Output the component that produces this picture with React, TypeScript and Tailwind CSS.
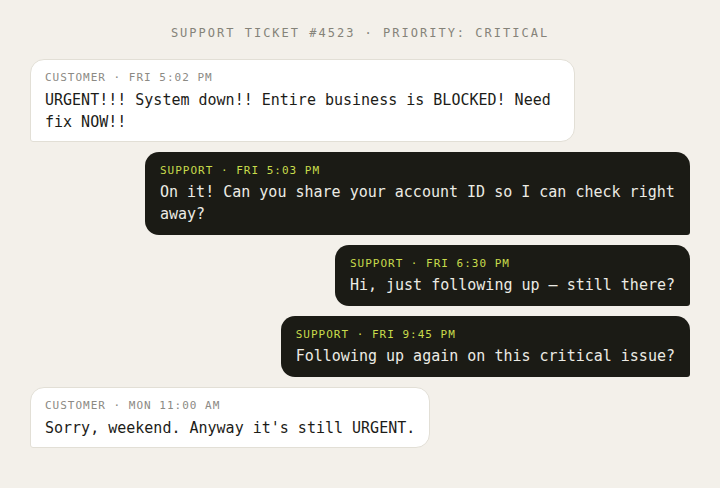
const mono = { fontFamily: '"DejaVu Sans Mono", "Liberation Mono", monospace' };

type Msg = { from: "customer" | "support"; meta: string; text: string };

const messages: Msg[] = [
  { from: "customer", meta: "CUSTOMER · FRI 5:02 PM", text: "URGENT!!! System down!! Entire business is BLOCKED! Need fix NOW!!" },
  { from: "support", meta: "SUPPORT · FRI 5:03 PM", text: "On it! Can you share your account ID so I can check right away?" },
  { from: "support", meta: "SUPPORT · FRI 6:30 PM", text: "Hi, just following up — still there?" },
  { from: "support", meta: "SUPPORT · FRI 9:45 PM", text: "Following up again on this critical issue?" },
  { from: "customer", meta: "CUSTOMER · MON 11:00 AM", text: "Sorry, weekend. Anyway it's still URGENT." },
];

function Bubble({ msg }: { msg: Msg }) {
  const isSupport = msg.from === "support";
  return (
    <div className={isSupport ? "flex justify-end" : "flex justify-start"}>
      <div
        className={
          isSupport
            ? "max-w-[545px] rounded-[14px] rounded-br-[3px] bg-[#1b1b15] px-[15px] pt-[11px] pb-[10px]"
            : "max-w-[545px] rounded-[14px] rounded-bl-[3px] bg-white border border-[#e2dfd6] px-[14px] pt-[10px] pb-[8px]"
        }
      >
        <div
          className={
            isSupport
              ? "text-[11px] leading-4 tracking-[1px] text-[#c8dc4c] mb-[2px]"
              : "text-[11px] leading-4 tracking-[1px] text-[#8c8a84] mb-[3px]"
          }
        >
          {msg.meta}
        </div>
        <div className={isSupport ? "text-[15px] leading-[22px] text-[#ecebe4]" : "text-[15px] leading-[22px] text-[#1c1c18]"}>
          {msg.text}
        </div>
      </div>
    </div>
  );
}

export default function App() {
  return (
    <div className="w-[720px] h-[488px] bg-[#f3f0ea] px-[30px] pt-6" style={mono}>
      <div className="text-center text-[12px] leading-[18px] tracking-[2px] text-[#858379] mb-[17px]">
        SUPPORT TICKET #4523 · PRIORITY: CRITICAL
      </div>
      <div className="flex flex-col gap-2.5">
        {messages.map((m, i) => (
          <Bubble key={i} msg={m} />
        ))}
      </div>
    </div>
  );
}
